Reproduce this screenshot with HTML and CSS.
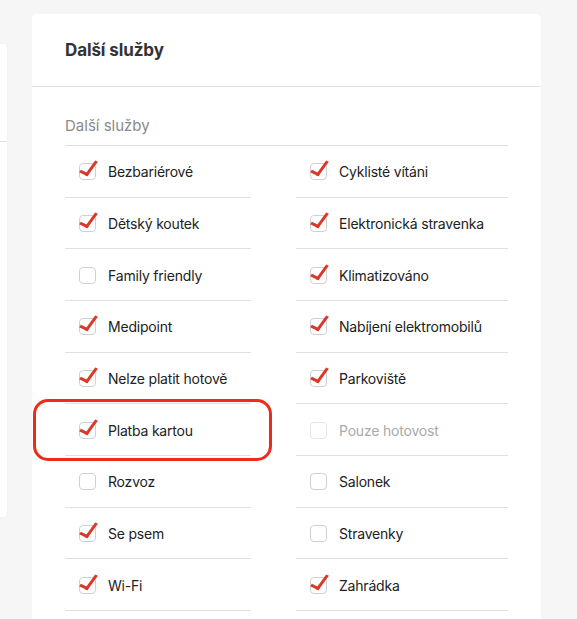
FILE: index.html
```html
<!DOCTYPE html>
<html lang="cs">
<head>
  <meta charset="UTF-8">
  <meta name="viewport" content="width=device-width, initial-scale=1.0">
  <title>Další služby</title>
  <link rel="stylesheet" href="styles.css">
</head>
<body>
  <div class="page">
    <div class="side-card">
      <div class="side-head"></div>
    </div>
    <div class="card">
      <div class="card-header">
        <h2>Další služby</h2>
      </div>
      <div class="card-body">
        <div class="group-label">Další služby</div>
        <div class="options">
          <label class="option"><span class="box checked"></span>Bezbariérové</label>
          <label class="option"><span class="box checked"></span>Cyklisté vítáni</label>
          <label class="option"><span class="box checked"></span>Dětský koutek</label>
          <label class="option"><span class="box checked"></span>Elektronická stravenka</label>
          <label class="option"><span class="box"></span>Family friendly</label>
          <label class="option"><span class="box checked"></span>Klimatizováno</label>
          <label class="option"><span class="box checked"></span>Medipoint</label>
          <label class="option"><span class="box checked"></span>Nabíjení elektromobilů</label>
          <label class="option"><span class="box checked"></span>Nelze platit hotově</label>
          <label class="option"><span class="box checked"></span>Parkoviště</label>
          <label class="option marked"><span class="box checked"></span>Platba kartou<span class="highlight"></span></label>
          <label class="option disabled"><span class="box"></span>Pouze hotovost</label>
          <label class="option"><span class="box"></span>Rozvoz</label>
          <label class="option"><span class="box"></span>Salonek</label>
          <label class="option"><span class="box checked"></span>Se psem</label>
          <label class="option"><span class="box"></span>Stravenky</label>
          <label class="option"><span class="box checked"></span>Wi-Fi</label>
          <label class="option"><span class="box checked"></span>Zahrádka</label>
        </div>
      </div>
    </div>
  </div>
</body>
</html>
```

FILE: styles.css
```css
body {
  margin: 0;
  background-color: #f6f6f6;
  font-family: Inter, "Noto Sans", Arial, sans-serif;
  color: #222;
}
.page {
  display: flex;
  align-items: flex-start;
  gap: 25px;
}
.side-card {
  width: 7px;
  height: 473px;
  margin-top: 44px;
  background-color: white;
  border-radius: 0 4px 4px 0;
  box-shadow: 0 0 2px rgba(0, 0, 0, 0.06);
}
.side-head {
  height: 97px;
  border-bottom: 1px solid #e0e0e0;
}
.card {
  width: 509px;
  margin-top: 14px;
  height: 640px;
  background-color: white;
  border-radius: 5px;
}
.card-header {
  height: 72px;
  padding-left: 33px;
  display: flex;
  align-items: center;
  border-bottom: 1px solid #e2e2e2;
}
.card-header h2 {
  margin: 0;
  font-size: 17px;
  font-weight: 700;
  color: #333;
  letter-spacing: -0.1px;
}
.card-body {
  padding: 0 33px;
}
.group-label {
  width: 443px;
  padding: 29px 0 9px;
  line-height: 20px;
  font-size: 15px;
  color: #8a8a8a;
  border-bottom: 1px solid #e0e0e0;
}
.options {
  display: grid;
  grid-template-columns: 186px 212px;
  column-gap: 45px;
}
.option {
  position: relative;
  display: flex;
  align-items: center;
  gap: 12px;
  height: 51.67px;
  box-sizing: border-box;
  padding-left: 14px;
  padding-top: 1px;
  border-bottom: 1px solid #e0e0e0;
  font-size: 14px;
  letter-spacing: -0.2px;
  color: #222;
}
.box {
  position: relative;
  flex: none;
  width: 17px;
  height: 17px;
  box-sizing: border-box;
  border: 1px solid #d0d0d0;
  border-radius: 4px;
  background-color: white;
}
.box.checked::after {
  content: "";
  position: absolute;
  left: 4px;
  top: -6px;
  width: 6px;
  height: 15px;
  border-right: 3.5px solid #d9382a;
  border-bottom: 3.5px solid #d9382a;
  transform: rotate(36deg) skewY(-10deg);
  transform-origin: center;
}
.disabled {
  color: #aaa;
}
.disabled .box {
  border-color: #e6e6e6;
}
.highlight {
  position: absolute;
  left: -32px;
  top: -5px;
  width: 239px;
  height: 62px;
  box-sizing: border-box;
  border: 3px solid #ee2a1b;
  border-radius: 15px;
}
```
